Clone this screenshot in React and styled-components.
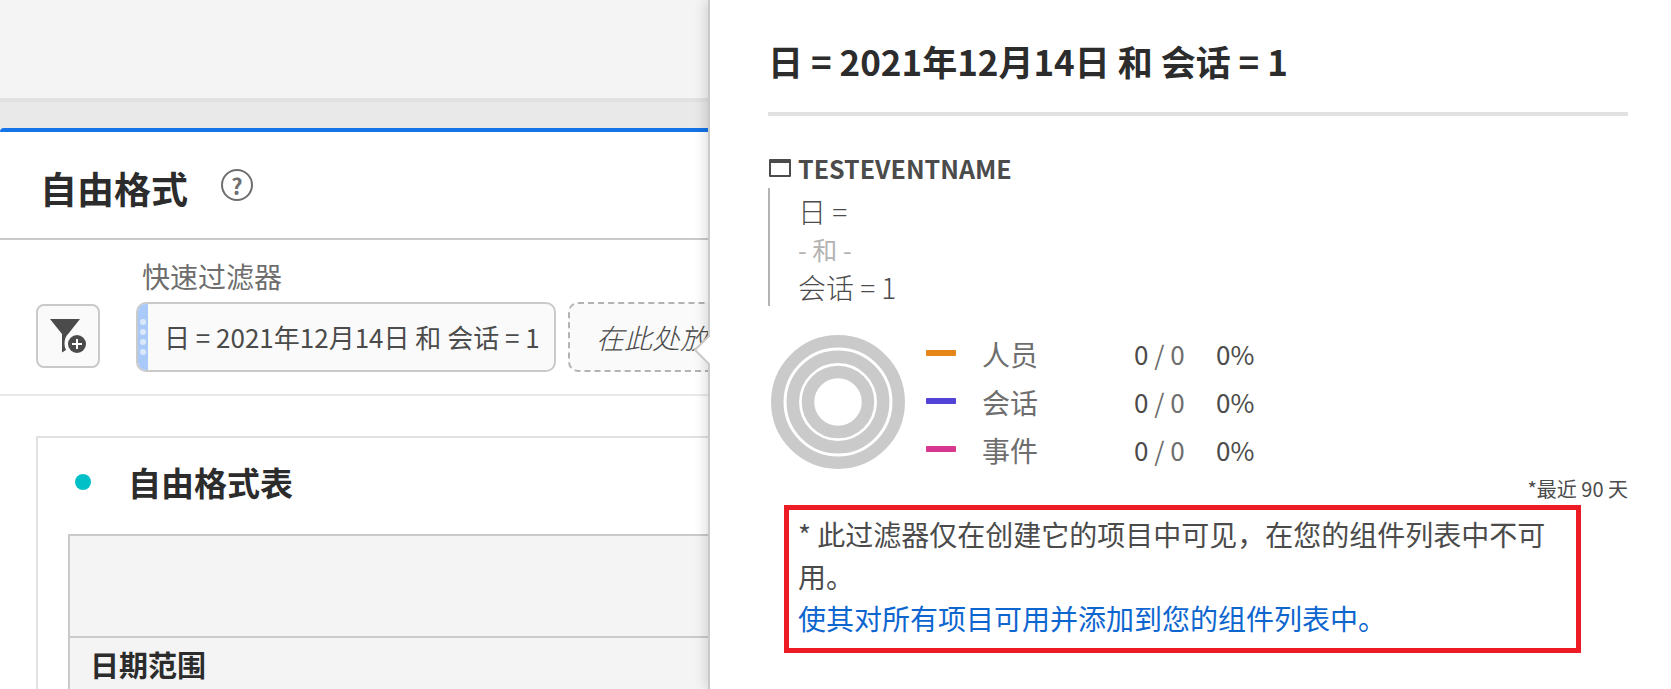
import React from "react";
import styled, { createGlobalStyle } from "styled-components";

const GlobalStyle = createGlobalStyle`
  *, *::before, *::after { box-sizing: border-box; }
  body {
    margin: 0;
    background: #fff;
    color: #4b4b4b;
    font-family: "Noto Sans CJK SC", "Noto Sans", sans-serif;
    font-size: 28px;
    line-height: 40px;
  }
  button { font-family: inherit; padding: 0; cursor: pointer; }
`;

const Page = styled.div`
  display: grid;
  grid-template-columns: minmax(0, 708fr) minmax(0, 963fr);
  height: 100vh;
  overflow: hidden;
`;

const Workspace = styled.main`
  min-width: 0;
  overflow: hidden;
  display: flex;
  flex-direction: column;
`;

const TopBand = styled.div`
  flex: none;
  height: 102px;
  background: #f4f4f4;
  border-bottom: 4px solid #e1e1e1;
`;

const Gutter = styled.div`
  flex: none;
  background: #e9e9e9;
  padding-top: 26px;
`;

const Panel = styled.section`
  background: #fff;
  border-top: 4px solid #1473e6;
  border-top-left-radius: 4px;
`;

const PanelHeader = styled.header`
  display: flex;
  align-items: center;
  gap: 33px;
  height: 108px;
  padding: 0 40px;
  border-bottom: 2px solid #cacaca;
`;

const PanelTitle = styled.h1`
  margin: 6px 0 0;
  font-size: 37px;
  line-height: 52px;
  font-weight: 700;
  color: #2c2c2c;
`;

const HelpButton = styled.button`
  width: 32px;
  height: 32px;
  border: 2px solid #6e6e6e;
  border-radius: 50%;
  background: none;
  color: #6e6e6e;
  font-size: 22px;
  line-height: 28px;
  font-weight: 700;
`;

const FilterBar = styled.div`
  display: flex;
  align-items: flex-end;
  gap: 36px;
  height: 156px;
  padding: 0 0 22px 36px;
  border-bottom: 2px solid #eaeaea;
`;

const FilterButton = styled.button`
  flex: none;
  display: flex;
  align-items: center;
  justify-content: center;
  width: 64px;
  height: 64px;
  margin-bottom: 4px;
  border: 2px solid #cacaca;
  border-radius: 8px;
  background: #fafafa;
`;

const FilterGroup = styled.div`
  flex: none;
`;

const FilterLabel = styled.div`
  padding: 0 0 6px 6px;
  color: #6e6e6e;
`;

const ChipRow = styled.div`
  display: flex;
  gap: 12px;
`;

const Chip = styled.button`
  display: flex;
  align-items: stretch;
  width: 420px;
  height: 70px;
  border: 2px solid #cacaca;
  border-radius: 10px;
  overflow: hidden;
  background: #fafafa;
  color: #4b4b4b;
`;

const ChipGrip = styled.span`
  display: flex;
  flex-direction: column;
  align-items: center;
  justify-content: center;
  gap: 4px;
  width: 10px;
  background: #a9c9f8;
`;

const GripDot = styled.span`
  width: 6px;
  height: 6px;
  border-radius: 50%;
  background: #dbe8fc;
`;

const ChipText = styled.span`
  padding-left: 16px;
  font-size: 26px;
  line-height: 66px;
  white-space: nowrap;
`;

const DropZone = styled.div`
  height: 70px;
  padding: 0 26px;
  border: 2px dashed #b3b3b3;
  border-radius: 10px;
  background: #fafafa;
  font-style: italic;
  font-weight: 300;
  line-height: 66px;
  white-space: nowrap;
`;

const TableCard = styled.section`
  margin: 40px 0 0 36px;
  padding: 0 0 24px 30px;
  border: solid #e1e1e1;
  border-width: 2px 0 2px 2px;
`;

const CardHeader = styled.header`
  display: flex;
  align-items: center;
  gap: 37px;
  height: 96px;
  padding: 0 0 8px 7px;
`;

const StatusDot = styled.span`
  width: 16px;
  height: 16px;
  border-radius: 50%;
  background: #00c0c7;
`;

const CardTitle = styled.h2`
  margin: 0;
  font-size: 33px;
  line-height: 48px;
  font-weight: 700;
  color: #2c2c2c;
`;

const DataTable = styled.table`
  width: 100%;
  border-collapse: collapse;
  background: #f4f4f4;
`;

const HeaderCell = styled.th`
  height: ${(p) => (p.$tall ? 102 : 54)}px;
  padding: 0 20px;
  border: solid #cacaca;
  border-width: 2px 0 2px 2px;
  text-align: left;
  font-size: 29px;
  font-weight: 700;
  color: #2c2c2c;
`;

const Popover = styled.aside`
  position: relative;
  z-index: 1;
  min-width: 0;
  padding: 34px 43px 36px 58px;
  border-left: 2px solid #cacaca;
  background: #fff;
  box-shadow: -2px 0 12px rgba(0, 0, 0, 0.15);
`;

const PopoverArrow = styled.svg`
  position: absolute;
  left: -16px;
  top: 333px;
`;

const PopoverTitle = styled.h2`
  margin: 0;
  padding-bottom: 24px;
  border-bottom: 4px solid #e1e1e1;
  font-size: 35px;
  line-height: 54px;
  font-weight: 700;
  color: #2c2c2c;
`;

const EventName = styled.h3`
  display: flex;
  align-items: center;
  gap: 7px;
  margin: 32px 0 0;
  font-size: 25px;
  line-height: 40px;
  font-weight: 700;
`;

const Definition = styled.div`
  padding: 4px 0 0 28px;
  border-left: 2px solid #b3b3b3;
`;

const Rule = styled.div`
  font-size: ${(p) => (p.$join ? 25 : 28)}px;
  line-height: 38px;
  font-weight: ${(p) => (p.$join ? 400 : 300)};
  color: ${(p) => (p.$join ? "#b3b3b3" : "#4b4b4b")};
`;

const Summary = styled.div`
  display: flex;
  align-items: center;
  gap: 20px;
  margin-top: 24px;
  padding-left: 2px;
`;

const StatTable = styled.table`
  border-collapse: collapse;
`;

const StatCell = styled.td`
  height: 48px;
  padding: 0;
  min-width: ${(p) => p.$width}px;
  font-size: 26px;
`;

const StatName = styled.th`
  min-width: 152px;
  padding: 0;
  text-align: left;
  font-weight: 400;
  color: #6e6e6e;
`;

const Swatch = styled.span`
  display: block;
  width: 30px;
  height: 6px;
  margin-bottom: 2px;
  border-radius: 1px;
  background: ${(p) => p.$color};
`;

const Total = styled.span`
  color: #6e6e6e;
`;

const Period = styled.div`
  font-size: 20px;
  line-height: 30px;
  text-align: right;
`;

const Notice = styled.div`
  margin: 1px 47px 0 16px;
  padding: 3px 10px 9px 9px;
  border: 5px solid #ed1c24;
  line-height: 42px;
`;

const NoticeText = styled.p`
  margin: 0;
`;

const NoticeLink = styled.a`
  color: #0d66d0;
  text-decoration: none;
`;

const stats = [
  { name: "人员", color: "#e68619" },
  { name: "会话", color: "#5243d6" },
  { name: "事件", color: "#d83790" },
];

const FilterIcon = () => (
  <svg width="36" height="34" viewBox="0 0 36 34" aria-hidden="true">
    <path d="M0 0H30L18.5 14.5Q14.5 18 14.5 25Q14.5 28 16 31L12 33.5V15Z" fill="#4b4b4b" />
    <circle cx="27" cy="25" r="9" fill="#4b4b4b" />
    <path d="M27 20V30M22 25H32" stroke="#fff" strokeWidth="2" />
  </svg>
);

const EventIcon = () => (
  <svg width="23" height="18" viewBox="0 0 23 18" aria-hidden="true">
    <path d="M2 0H22Q23 0 23 1V17Q23 18 22 18H2Q1 18 1 17V1Q1 0 2 0ZM3 4V16H21V4Z" fill="#4b4b4b" fillRule="evenodd" />
  </svg>
);

const Rings = () => (
  <svg width="136" height="136" viewBox="0 0 136 136" role="img" aria-label="0%">
    <g fill="none" stroke="#cacaca" strokeWidth="12.5">
      <circle cx="68" cy="68" r="60.7" />
      <circle cx="68" cy="68" r="45.2" />
      <circle cx="68" cy="68" r="30" />
    </g>
  </svg>
);

export default function App() {
  return (
    <>
      <GlobalStyle />
      <Page>
        <Workspace>
          <TopBand />
          <Gutter>
            <Panel>
              <PanelHeader>
                <PanelTitle>自由格式</PanelTitle>
                <HelpButton type="button">?</HelpButton>
              </PanelHeader>
              <FilterBar>
                <FilterButton type="button" aria-label="添加过滤器">
                  <FilterIcon />
                </FilterButton>
                <FilterGroup>
                  <FilterLabel>快速过滤器</FilterLabel>
                  <ChipRow>
                    <Chip type="button">
                      <ChipGrip>
                        <GripDot />
                        <GripDot />
                        <GripDot />
                        <GripDot />
                      </ChipGrip>
                      <ChipText>日 = 2021年12月14日 和 会话 = 1</ChipText>
                    </Chip>
                    <DropZone>在此处放</DropZone>
                  </ChipRow>
                </FilterGroup>
              </FilterBar>
              <TableCard>
                <CardHeader>
                  <StatusDot />
                  <CardTitle>自由格式表</CardTitle>
                </CardHeader>
                <DataTable>
                  <thead>
                    <tr>
                      <HeaderCell $tall />
                    </tr>
                    <tr>
                      <HeaderCell scope="col">日期范围</HeaderCell>
                    </tr>
                  </thead>
                </DataTable>
              </TableCard>
            </Panel>
          </Gutter>
        </Workspace>

        <Popover>
          <PopoverArrow width="16" height="34" viewBox="0 0 16 34" aria-hidden="true">
            <path d="M16 2L1 17L16 32Z" fill="#fff" />
            <path d="M16 2L1 17L16 32" fill="none" stroke="#cacaca" strokeWidth="2" />
          </PopoverArrow>
          <PopoverTitle>日 = 2021年12月14日 和 会话 = 1</PopoverTitle>
          <EventName>
            <EventIcon />
            TESTEVENTNAME
          </EventName>
          <Definition>
            <Rule>日 =</Rule>
            <Rule $join>- 和 -</Rule>
            <Rule>会话 = 1</Rule>
          </Definition>
          <Summary>
            <Rings />
            <StatTable>
              <tbody>
                {stats.map((s) => (
                  <tr key={s.name}>
                    <StatCell $width={56}>
                      <Swatch $color={s.color} />
                    </StatCell>
                    <StatName scope="row">{s.name}</StatName>
                    <StatCell $width={82}>
                      0 <Total>/ 0</Total>
                    </StatCell>
                    <StatCell $width={40}>0%</StatCell>
                  </tr>
                ))}
              </tbody>
            </StatTable>
          </Summary>
          <Period>*最近 90 天</Period>
          <Notice>
            <NoticeText>* 此过滤器仅在创建它的项目中可见，在您的组件列表中不可用。</NoticeText>
            <NoticeLink href="#components">使其对所有项目可用并添加到您的组件列表中。</NoticeLink>
          </Notice>
        </Popover>
      </Page>
    </>
  );
}
